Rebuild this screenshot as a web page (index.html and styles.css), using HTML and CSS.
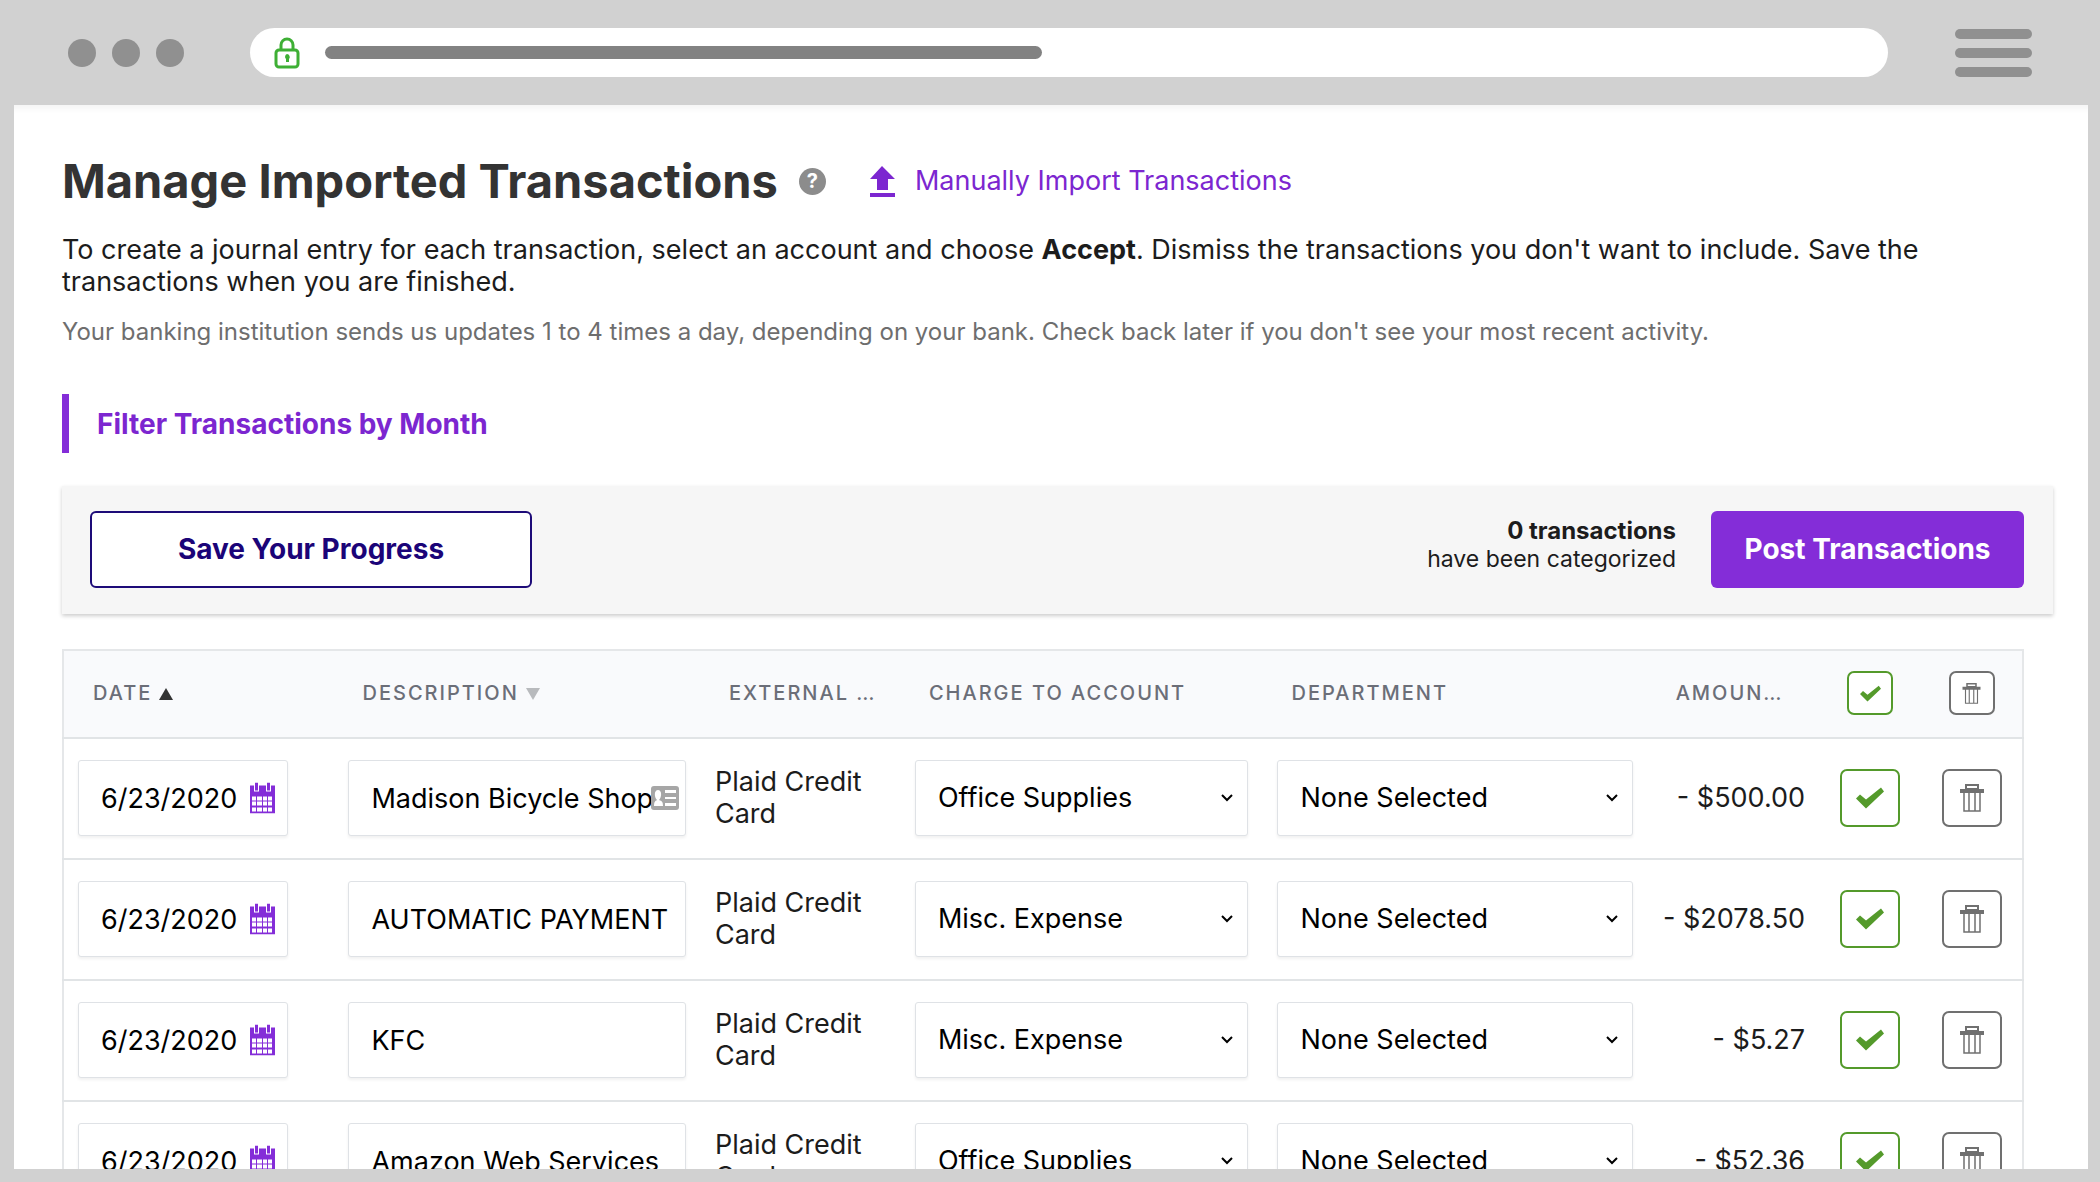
FILE: index.html
```html
<!DOCTYPE html>
<html lang="en">
    <head>
        <meta charset="UTF-8" />
        <meta name="viewport" content="width=device-width, initial-scale=1.0"/>
        <title>Manage Imported Transactions</title>
        <link rel="stylesheet" href="styles.css">
    </head>
    <body>
        <svg class="icon-defs" aria-hidden="true">
            <symbol id="icon-calendar" viewBox="0 0 25 31">
                <path fill="currentColor" d="M0 3h25v28H0z"/>
                <path fill="#fff" d="M4 2h5v7H4zM16 2h5v7h-5z"/>
                <path fill="currentColor" d="M5 0h3v8H5zM17 0h3v8h-3z"/>
                <path fill="#fff" d="M2 14h4v4H2zM7 14h5v4H7zM13 14h4v4h-4zM18 14h4v4h-4zM2 19h4v4H2zM7 19h5v4H7zM13 19h4v4h-4zM18 19h4v4h-4zM2 25h4v4H2zM7 25h5v4H7zM13 25h4v4h-4zM18 25h4v4h-4z"/>
            </symbol>
            <symbol id="icon-check" viewBox="0 0 28 21">
                <path fill="currentColor" d="M0 11l4-4 6 5L25 0l3 4L10 21z"/>
            </symbol>
            <symbol id="icon-trash" viewBox="0 0 24 28">
                <path fill="currentColor" fill-rule="evenodd" d="M5 0h14v5h5v4H0V5h5zM7 2v2h10V2z"/>
                <path fill="none" stroke="currentColor" stroke-width="1.5" d="M4 8v19h16V8M9 8v19M15 8v19"/>
            </symbol>
            <symbol id="icon-chevron" viewBox="0 0 12 8">
                <path fill="none" stroke="#000" stroke-width="2" d="M1 1l5 5 5-5"/>
            </symbol>
        </svg>
        <div class="browser">
            <div class="browser-bar">
                <div class="dots">
                    <span class="dot"></span>
                    <span class="dot"></span>
                    <span class="dot"></span>
                </div>
                <div class="address">
                    <svg class="lock" viewBox="0 0 26 32">
                        <g fill="none" stroke="#3eaf35" stroke-width="3">
                            <rect x="2" y="13" width="22" height="17" rx="3"/>
                            <path d="M7 13V8a6 6 0 0 1 12 0v5"/>
                        </g>
                        <path fill="#3eaf35" d="M13 17a3 3 0 0 1 2 5v3h-3v-3a3 3 0 0 1 1-5z"/>
                    </svg>
                    <span class="address-line"></span>
                </div>
                <div class="menu">
                    <span class="menu-line"></span>
                    <span class="menu-line"></span>
                    <span class="menu-line"></span>
                </div>
            </div>
            <main class="page">
                <div class="heading">
                    <h1>Manage Imported Transactions</h1>
                    <button type="button" class="help-btn">?</button>
                    <a href="#" class="import-link">
                        <svg class="upload" viewBox="0 0 25 31">
                            <path fill="currentColor" d="M12 0l13 13h-7v11H7V13H0zM0 27h25v4H0z"/>
                        </svg>
                        Manually Import Transactions
                    </a>
                </div>
                <p class="intro">To create a journal entry for each transaction, select an account and choose <strong>Accept</strong>. Dismiss the transactions you don't want to include. Save the transactions when you are finished.</p>
                <p class="note">Your banking institution sends us updates 1 to 4 times a day, depending on your bank. Check back later if you don't see your most recent activity.</p>
                <button type="button" class="filter-btn">Filter Transactions by Month</button>
                <div class="actions">
                    <button type="button" class="save-btn">Save Your Progress</button>
                    <div class="count"><strong>0 transactions</strong><br>have been categorized</div>
                    <button type="button" class="post-btn">Post Transactions</button>
                </div>
                <table class="transactions">
                    <colgroup>
                        <col class="col-date">
                        <col class="col-description">
                        <col class="col-external">
                        <col class="col-charge">
                        <col class="col-department">
                        <col class="col-amount">
                        <col class="col-action">
                        <col class="col-action">
                    </colgroup>
                    <thead>
                        <tr>
                            <th id="date">DATE<span class="sort-up"></span></th>
                            <th id="description">DESCRIPTION<span class="sort-down"></span></th>
                            <th>EXTERNAL …</th>
                            <th id="charge">CHARGE TO ACCOUNT</th>
                            <th id="department">DEPARTMENT</th>
                            <th>AMOUN…</th>
                            <th class="action"><button type="button" class="icon-btn small accept" aria-label="Accept all"><svg><use href="#icon-check"/></svg></button></th>
                            <th class="action"><button type="button" class="icon-btn small dismiss" aria-label="Dismiss all"><svg><use href="#icon-trash"/></svg></button></th>
                        </tr>
                    </thead>
                    <tbody>
                        <tr>
                            <td>
                                <div class="field date-field">
                                    <input type="text" value="6/23/2020" aria-labelledby="date">
                                    <svg class="calendar"><use href="#icon-calendar"/></svg>
                                </div>
                            </td>
                            <td>
                                <div class="field">
                                    <input type="text" value="Madison Bicycle Shop" aria-labelledby="description">
                                    <svg class="contact" viewBox="0 0 28 24">
                                        <rect width="28" height="24" rx="3" fill="#a6a6a6"/>
                                        <path fill="#fff" d="M3 20c0-4 1-5 3-6-3-3-3-10 1-10s4 7 1 10c3 1 4 2 4 6zM14 4h11v3H14zM14 11h11v2H14zM14 17h11v3H14z"/>
                                    </svg>
                                </div>
                            </td>
                            <td>Plaid Credit Card</td>
                            <td>
                                <div class="field">
                                    <select aria-labelledby="charge"><option>Office Supplies</option></select>
                                    <svg class="chevron"><use href="#icon-chevron"/></svg>
                                </div>
                            </td>
                            <td>
                                <div class="field">
                                    <select aria-labelledby="department"><option>None Selected</option></select>
                                    <svg class="chevron"><use href="#icon-chevron"/></svg>
                                </div>
                            </td>
                            <td class="amount">- $500.00</td>
                            <td class="action"><button type="button" class="icon-btn accept" aria-label="Accept"><svg><use href="#icon-check"/></svg></button></td>
                            <td class="action"><button type="button" class="icon-btn dismiss" aria-label="Dismiss"><svg><use href="#icon-trash"/></svg></button></td>
                        </tr>
                        <tr>
                            <td>
                                <div class="field date-field">
                                    <input type="text" value="6/23/2020" aria-labelledby="date">
                                    <svg class="calendar"><use href="#icon-calendar"/></svg>
                                </div>
                            </td>
                            <td>
                                <div class="field">
                                    <input type="text" value="AUTOMATIC PAYMENT" aria-labelledby="description">
                                </div>
                            </td>
                            <td>Plaid Credit Card</td>
                            <td>
                                <div class="field">
                                    <select aria-labelledby="charge"><option>Misc. Expense</option></select>
                                    <svg class="chevron"><use href="#icon-chevron"/></svg>
                                </div>
                            </td>
                            <td>
                                <div class="field">
                                    <select aria-labelledby="department"><option>None Selected</option></select>
                                    <svg class="chevron"><use href="#icon-chevron"/></svg>
                                </div>
                            </td>
                            <td class="amount">- $2078.50</td>
                            <td class="action"><button type="button" class="icon-btn accept" aria-label="Accept"><svg><use href="#icon-check"/></svg></button></td>
                            <td class="action"><button type="button" class="icon-btn dismiss" aria-label="Dismiss"><svg><use href="#icon-trash"/></svg></button></td>
                        </tr>
                        <tr>
                            <td>
                                <div class="field date-field">
                                    <input type="text" value="6/23/2020" aria-labelledby="date">
                                    <svg class="calendar"><use href="#icon-calendar"/></svg>
                                </div>
                            </td>
                            <td>
                                <div class="field">
                                    <input type="text" value="KFC" aria-labelledby="description">
                                </div>
                            </td>
                            <td>Plaid Credit Card</td>
                            <td>
                                <div class="field">
                                    <select aria-labelledby="charge"><option>Misc. Expense</option></select>
                                    <svg class="chevron"><use href="#icon-chevron"/></svg>
                                </div>
                            </td>
                            <td>
                                <div class="field">
                                    <select aria-labelledby="department"><option>None Selected</option></select>
                                    <svg class="chevron"><use href="#icon-chevron"/></svg>
                                </div>
                            </td>
                            <td class="amount">- $5.27</td>
                            <td class="action"><button type="button" class="icon-btn accept" aria-label="Accept"><svg><use href="#icon-check"/></svg></button></td>
                            <td class="action"><button type="button" class="icon-btn dismiss" aria-label="Dismiss"><svg><use href="#icon-trash"/></svg></button></td>
                        </tr>
                        <tr>
                            <td>
                                <div class="field date-field">
                                    <input type="text" value="6/23/2020" aria-labelledby="date">
                                    <svg class="calendar"><use href="#icon-calendar"/></svg>
                                </div>
                            </td>
                            <td>
                                <div class="field">
                                    <input type="text" value="Amazon Web Services" aria-labelledby="description">
                                </div>
                            </td>
                            <td>Plaid Credit Card</td>
                            <td>
                                <div class="field">
                                    <select aria-labelledby="charge"><option>Office Supplies</option></select>
                                    <svg class="chevron"><use href="#icon-chevron"/></svg>
                                </div>
                            </td>
                            <td>
                                <div class="field">
                                    <select aria-labelledby="department"><option>None Selected</option></select>
                                    <svg class="chevron"><use href="#icon-chevron"/></svg>
                                </div>
                            </td>
                            <td class="amount">- $52.36</td>
                            <td class="action"><button type="button" class="icon-btn accept" aria-label="Accept"><svg><use href="#icon-check"/></svg></button></td>
                            <td class="action"><button type="button" class="icon-btn dismiss" aria-label="Dismiss"><svg><use href="#icon-trash"/></svg></button></td>
                        </tr>
                    </tbody>
                </table>
            </main>
        </div>
    </body>
</html>
```
FILE: styles.css
```css
* {
    box-sizing: border-box;
}
body {
    margin: 0;
    font-family: Inter, "Liberation Sans", sans-serif;
    font-size: 27px;
    line-height: 32px;
    color: #1c1c1c;
}
button, input, select {
    font: inherit;
}
button {
    cursor: pointer;
}
.icon-defs {
    display: none;
}

/* browser frame */
.browser {
    display: flex;
    flex-direction: column;
    height: 100vh;
    padding: 0 12px 13px 14px;
    background-color: #d1d1d1;
    overflow: hidden;
}
.browser-bar {
    display: flex;
    flex: none;
    align-items: center;
    height: 105px;
    padding: 0 56px 0 54px;
}
.dots {
    display: flex;
    gap: 16px;
    margin-right: 66px;
}
.dot {
    width: 28px;
    height: 28px;
    border-radius: 50%;
    background-color: #909090;
}
.address {
    display: flex;
    flex: 1;
    align-items: center;
    gap: 25px;
    height: 49px;
    padding-left: 24px;
    border-radius: 25px;
    background-color: #fff;
}
.lock {
    width: 26px;
    height: 32px;
}
.address-line {
    width: 44.4%;
    height: 13px;
    border-radius: 7px;
    background-color: #828282;
}
.menu {
    display: flex;
    flex-direction: column;
    gap: 9px;
    width: 77px;
    margin-left: 67px;
}
.menu-line {
    height: 10px;
    border-radius: 5px;
    background-color: #909090;
}

/* page */
.page {
    flex: 1;
    min-height: 0;
    padding: 46px 35px 0 48px;
    background-color: #fff;
    box-shadow: inset 0 10px 6px -6px #f5f5f5;
    overflow: hidden;
}
.heading {
    display: flex;
    align-items: center;
    height: 60px;
}
h1 {
    margin: 0;
    font-size: 47px;
    line-height: 60px;
    color: #333;
}
.help-btn {
    width: 27px;
    height: 27px;
    margin: 0 44px 0 21px;
    padding: 0;
    border: none;
    border-radius: 50%;
    background-color: #8c8c8c;
    color: #fff;
    font-size: 20px;
    font-weight: bold;
    line-height: 27px;
}
.import-link {
    display: flex;
    align-items: center;
    gap: 20px;
    color: #7c26d0;
    text-decoration: none;
}
.upload {
    width: 25px;
    height: 31px;
}
.intro {
    margin: 23px 0 18px;
}
.note {
    margin: 0 0 46px;
    font-size: 24px;
    color: #6e6e6e;
}
.filter-btn {
    display: block;
    height: 59px;
    margin-bottom: 33px;
    padding: 0 0 0 28px;
    border: none;
    border-left: 7px solid #842dd8;
    background: none;
    color: #7c26d0;
    font-size: 28px;
    font-weight: bold;
}
.actions {
    display: flex;
    align-items: center;
    height: 128px;
    margin-bottom: 35px;
    padding: 0 29px 2px 28px;
    background-color: #f6f6f6;
    box-shadow: 0 2px 4px rgba(0, 0, 0, 0.2);
}
.save-btn, .post-btn {
    height: 77px;
    border-radius: 6px;
    font-size: 28px;
    font-weight: bold;
}
.save-btn {
    width: 442px;
    border: 2px solid #1d0b78;
    background-color: #fff;
    color: #1b0478;
}
.post-btn {
    width: 313px;
    border: none;
    background-color: #842dd8;
    color: #fff;
}
.count {
    margin: 0 35px 8px auto;
    font-size: 23px;
    line-height: 28px;
    text-align: right;
}
.count strong {
    font-size: 24px;
}

/* transactions table */
.transactions {
    width: calc(100% - 29px);
    border: 2px solid #e5e7e9;
    border-collapse: collapse;
    table-layout: fixed;
}
.col-date {
    width: 13.8%;
}
.col-description {
    width: 18.7%;
}
.col-external {
    width: 10.2%;
}
.col-charge {
    width: 18.5%;
}
.col-department {
    width: 19.6%;
}
.col-amount {
    width: 8.8%;
}
.col-action {
    width: 5.2%;
}
.transactions th {
    height: 88px;
    padding: 0 0 2px 29px;
    border-bottom: 2px solid #e1e4e6;
    background-color: #f9fafc;
    color: #6b6e78;
    font-size: 20px;
    font-weight: 500;
    letter-spacing: 2px;
    text-align: left;
    white-space: nowrap;
}
.transactions td {
    height: 121px;
    padding: 0 14px 1px 15px;
    border-bottom: 2px solid #e1e4e6;
}
.transactions td:first-child {
    padding-left: 14px;
}
.transactions .action {
    padding: 0 0 2px;
    text-align: center;
}
.transactions .amount {
    padding-left: 0;
    text-align: right;
    white-space: nowrap;
}
.sort-up, .sort-down {
    display: inline-block;
    margin-left: 7px;
    border: 7px solid transparent;
}
.sort-up {
    border-top: none;
    border-bottom: 12px solid #333;
}
.sort-down {
    border-top: 12px solid #b8babd;
    border-bottom: none;
}
.field {
    position: relative;
}
.date-field {
    width: 210px;
}
.field input, .field select {
    display: block;
    width: 100%;
    height: 76px;
    padding: 0 12px 0 22px;
    border: 1px solid #dfe2e6;
    border-radius: 3px;
    background-color: #fff;
    box-shadow: 0 2px 3px rgba(0, 0, 0, 0.06);
    color: #000;
    appearance: none;
}
.field svg {
    position: absolute;
    top: 50%;
    transform: translateY(-50%);
    pointer-events: none;
}
.field .calendar {
    right: 13px;
    width: 25px;
    height: 31px;
    color: #842dd8;
}
.field .contact {
    right: 7px;
    width: 28px;
    height: 24px;
}
.field .chevron {
    right: 15px;
    width: 12px;
    height: 8px;
}
.icon-btn {
    display: inline-flex;
    align-items: center;
    justify-content: center;
    width: 60px;
    height: 58px;
    padding: 0;
    border: 2px solid;
    border-radius: 7px;
    background-color: #fff;
    vertical-align: middle;
}
.icon-btn svg {
    width: 28px;
    height: 28px;
}
.icon-btn.small {
    width: 46px;
    height: 44px;
}
.icon-btn.small svg {
    width: 21px;
    height: 21px;
}
.accept {
    color: #549a2b;
}
.dismiss {
    color: #707070;
}
```
